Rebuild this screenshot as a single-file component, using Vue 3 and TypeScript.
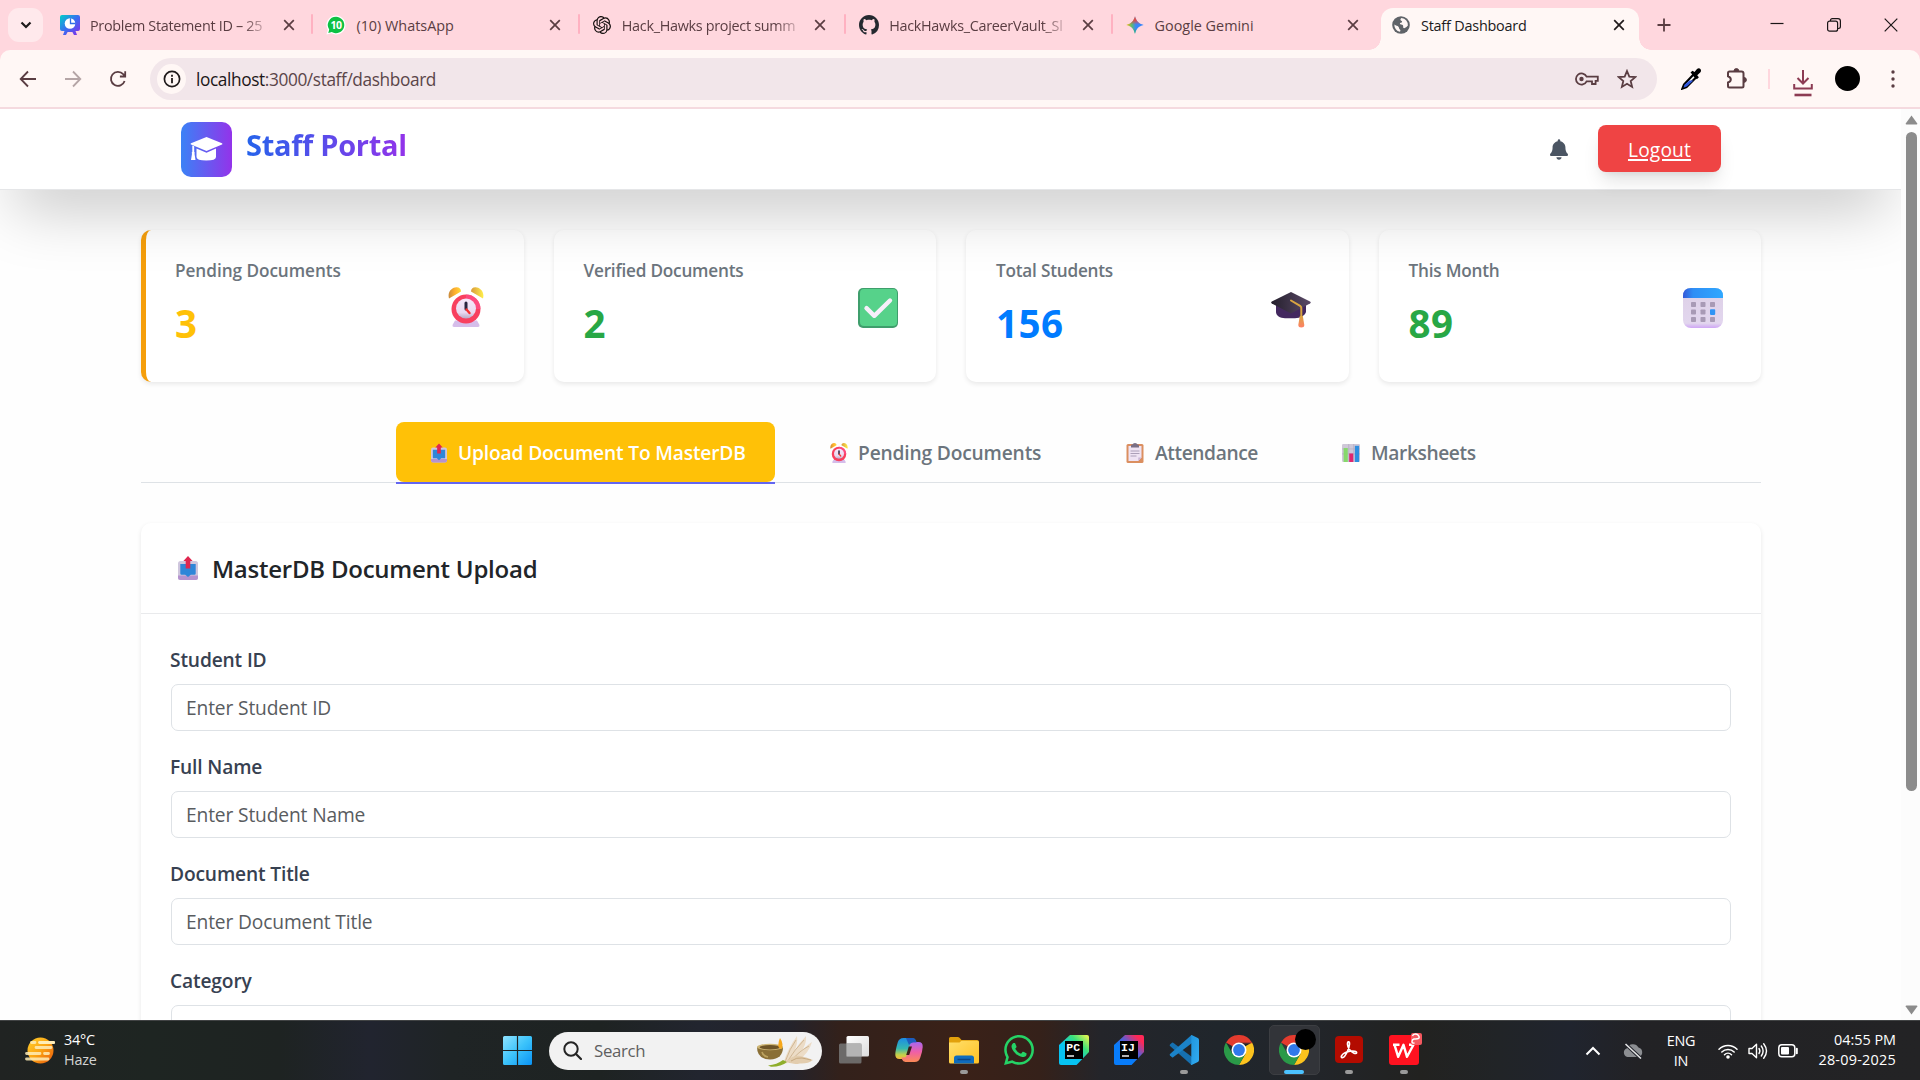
<script setup lang="ts">
interface BrowserTab {
  icon: string
  title: string
  cls: string
  active?: boolean
}
interface Stat {
  label: string
  value: string
  icon: string
  tone: string
}
interface NavTab {
  label: string
  icon: string
  cls: string
}
interface TaskApp {
  icon: string
  state?: 'open' | 'focused'
}

const browserTabs: BrowserTab[] = [
  { icon: 'board', title: 'Problem Statement ID – 25', cls: 't-board' },
  { icon: 'wa-badge', title: '(10) WhatsApp', cls: 't-wa' },
  { icon: 'openai', title: 'Hack_Hawks project summ', cls: 't-ai' },
  { icon: 'github', title: 'HackHawks_CareerVault_Sl', cls: 't-gh' },
  { icon: 'gemini', title: 'Google Gemini', cls: 't-gem' },
  { icon: 'globe', title: 'Staff Dashboard', cls: 't-staff', active: true },
]

const stats: Stat[] = [
  { label: 'Pending Documents', value: '3', icon: 'alarm', tone: 'amber' },
  { label: 'Verified Documents', value: '2', icon: 'check', tone: 'green' },
  { label: 'Total Students', value: '156', icon: 'gradcap', tone: 'blue' },
  { label: 'This Month', value: '89', icon: 'calendar', tone: 'green' },
]

const navTabs: NavTab[] = [
  { label: 'Upload Document To MasterDB', icon: 'outbox', cls: 'n-upload' },
  { label: 'Pending Documents', icon: 'alarm', cls: 'n-pending' },
  { label: 'Attendance', icon: 'clipboard', cls: 'n-attend' },
  { label: 'Marksheets', icon: 'chart', cls: 'n-marks' },
]

const fields = [
  { label: 'Student ID', placeholder: 'Enter Student ID' },
  { label: 'Full Name', placeholder: 'Enter Student Name' },
  { label: 'Document Title', placeholder: 'Enter Document Title' },
  { label: 'Category', placeholder: '' },
]

const apps: TaskApp[] = [
  { icon: 'taskview' },
  { icon: 'copilot' },
  { icon: 'explorer', state: 'open' },
  { icon: 'whatsapp' },
  { icon: 'pycharm' },
  { icon: 'intellij' },
  { icon: 'vscode', state: 'open' },
  { icon: 'chrome' },
  { icon: 'chrome', state: 'focused' },
  { icon: 'acrobat', state: 'open' },
  { icon: 'wps', state: 'open' },
]
</script>

<template>
  <svg class="defs" width="0" height="0" aria-hidden="true">
    <defs>
      <linearGradient id="g-board" x1="0" y1="0" x2="1" y2="1"><stop offset="0" stop-color="#00cfc8" /><stop offset=".5" stop-color="#3a6df0" /><stop offset="1" stop-color="#8a2be8" /></linearGradient>
      <linearGradient id="g-bell" x1="0" y1="0" x2="1" y2="0"><stop offset="0" stop-color="#c98a3c" /><stop offset=".5" stop-color="#ffb02e" /><stop offset="1" stop-color="#ffd93b" /></linearGradient>
      <linearGradient id="g-bell2" x1="0" y1="0" x2="1" y2="0"><stop offset="0" stop-color="#d9993a" /><stop offset="1" stop-color="#ffef4a" /></linearGradient>
      <linearGradient id="g-face" x1="0" y1="0" x2="0" y2="1"><stop offset="0" stop-color="#f6e6fa" /><stop offset=".7" stop-color="#ead9f0" /><stop offset="1" stop-color="#b9a9c4" /></linearGradient>
      <linearGradient id="g-cap" x1="0" y1="0" x2="1" y2="0"><stop offset="0" stop-color="#241f2c" /><stop offset="1" stop-color="#5b4a68" /></linearGradient>
      <linearGradient id="g-tassel" x1="0" y1="0" x2="0" y2="1"><stop offset="0" stop-color="#d9a441" /><stop offset="1" stop-color="#ff8066" /></linearGradient>
      <linearGradient id="g-cal" x1="0" y1="0" x2="1" y2="0"><stop offset="0" stop-color="#3458d8" /><stop offset=".25" stop-color="#2f8ef5" /><stop offset="1" stop-color="#2fa8ff" /></linearGradient>
      <linearGradient id="g-calb" x1="0" y1="0" x2="0" y2="1"><stop offset="0" stop-color="#ddd0e6" /><stop offset=".88" stop-color="#e2d6ee" /><stop offset="1" stop-color="#cfa6f5" /></linearGradient>
      <linearGradient id="g-win" x1="0" y1="0" x2="1" y2="1"><stop offset="0" stop-color="#8fe3ff" /><stop offset=".5" stop-color="#3cc3fb" /><stop offset="1" stop-color="#0a93f5" /></linearGradient>
      <linearGradient id="g-sun" x1="0" y1="0" x2="1" y2="1"><stop offset="0" stop-color="#ffd02e" /><stop offset=".5" stop-color="#fba313" /><stop offset="1" stop-color="#e8560c" /></linearGradient>
      <linearGradient id="g-folder" x1="0" y1="0" x2="1" y2="1"><stop offset="0" stop-color="#ffdf6b" /><stop offset="1" stop-color="#ffc123" /></linearGradient>
      <linearGradient id="g-cop1" x1="0" y1="0" x2="0" y2="1"><stop offset="0" stop-color="#1b8ce6" /><stop offset=".5" stop-color="#35b8b0" /><stop offset=".8" stop-color="#c3d14a" /><stop offset="1" stop-color="#f7b73a" /></linearGradient>
      <linearGradient id="g-cop2" x1="0" y1="0" x2="0" y2="1"><stop offset="0" stop-color="#a767f0" /><stop offset=".5" stop-color="#ef5fa7" /><stop offset="1" stop-color="#fb8a55" /></linearGradient>
      <linearGradient id="g-pc" x1="0" y1="1" x2="1" y2="0"><stop offset=".4" stop-color="#07c3f2" /><stop offset=".7" stop-color="#3be07a" /><stop offset="1" stop-color="#fcf84a" /></linearGradient>
      <linearGradient id="g-ij" x1="0" y1="1" x2="1" y2="0"><stop offset=".4" stop-color="#087cfa" /><stop offset=".62" stop-color="#6b57c8" /><stop offset=".85" stop-color="#fe2857" /></linearGradient>
      <linearGradient id="g-code" x1="0" y1="0" x2="1" y2="1"><stop offset="0" stop-color="#1f94dc" /><stop offset="1" stop-color="#32adf2" /></linearGradient>
      <linearGradient id="g-tv" x1="0" y1="0" x2="1" y2="1"><stop offset="0" stop-color="#ffffff" /><stop offset="1" stop-color="#dcdcdc" /></linearGradient>
      <linearGradient id="g-gem" x1="0" y1=".5" x2="1" y2=".5"><stop offset="0" stop-color="#fbbc04" /><stop offset=".32" stop-color="#5bb974" /><stop offset=".55" stop-color="#3b86f7" /><stop offset="1" stop-color="#3186ff" /></linearGradient>
      <linearGradient id="g-gem2" x1="0" y1="0" x2="0" y2="1"><stop offset="0" stop-color="#f04438" /><stop offset=".25" stop-color="#f04438" stop-opacity=".85" /><stop offset=".48" stop-color="#f04438" stop-opacity="0" /><stop offset=".7" stop-color="#0ebc5f" stop-opacity="0" /><stop offset="1" stop-color="#0ebc5f" /></linearGradient>

      <symbol id="i-board" viewBox="0 0 20 20"><path d="M2 0h16q2 0 2 2v12q0 2-2 2h-2.500l1.500 4h-3l-1.600-3h-4.800L6 20H3l1.500-4H2q-2 0-2-2V2q0-2 2-2z" fill="url(#g-board)" /><circle cx="10" cy="8.500" r="5.300" fill="#fff" /><path d="M10.500 3.200v5.300h5.200" fill="none" stroke="#2f6fe6" stroke-width="1.300" /></symbol>
      <symbol id="i-wa-badge" viewBox="0 0 20 20"><path d="M10 .5a9.500 9.500 0 1 1-4.600 17.800L.5 19.600l1.300-4.800A9.500 9.500 0 0 1 10 .5z" fill="#fff" /><path d="M10 1.800a8.200 8.200 0 1 1-4.200 15.200L2.300 17.900l.9-3.300A8.200 8.200 0 0 1 10 1.800z" fill="#0dc143" /><text x="10" y="13.800" text-anchor="middle" font-family="Open Sans, sans-serif" font-weight="700" font-size="10.500" letter-spacing="-.5" fill="#fff">10</text></symbol>
      <symbol id="i-openai" viewBox="0 0 24 24"><path fill="#16100f" d="M22.2819 9.8211a5.9847 5.9847 0 0 0-.5157-4.9108 6.0462 6.0462 0 0 0-6.5098-2.9A6.0651 6.0651 0 0 0 4.9807 4.1818a5.9847 5.9847 0 0 0-3.9977 2.9 6.0462 6.0462 0 0 0 .7427 7.0966 5.98 5.98 0 0 0 .511 4.9107 6.051 6.051 0 0 0 6.5146 2.9001A5.9847 5.9847 0 0 0 13.2599 24a6.0557 6.0557 0 0 0 5.7718-4.2058 5.9894 5.9894 0 0 0 3.9977-2.9001 6.0557 6.0557 0 0 0-.7475-7.0729zm-9.022 12.6081a4.4755 4.4755 0 0 1-2.8764-1.0408l.1419-.0804 4.7783-2.7582a.7948.7948 0 0 0 .3927-.6813v-6.7369l2.02 1.1686a.071.071 0 0 1 .038.052v5.5826a4.504 4.504 0 0 1-4.4945 4.4944zm-9.6607-4.1254a4.4708 4.4708 0 0 1-.5346-3.0137l.142.0852 4.783 2.7582a.7712.7712 0 0 0 .7806 0l5.8428-3.3685v2.3324a.0804.0804 0 0 1-.0332.0615L9.74 19.9502a4.4992 4.4992 0 0 1-6.1408-1.6464zM2.3408 7.8956a4.485 4.485 0 0 1 2.3655-1.9728V11.6a.7664.7664 0 0 0 .3879.6765l5.8144 3.3543-2.0201 1.1685a.0757.0757 0 0 1-.071 0l-4.8303-2.7865A4.504 4.504 0 0 1 2.3408 7.872zm16.5963 3.8558L13.1038 8.364 15.1192 7.2a.0757.0757 0 0 1 .071 0l4.8303 2.7913a4.4944 4.4944 0 0 1-.6765 8.1042v-5.6772a.79.79 0 0 0-.407-.667zm2.0107-3.0231l-.142-.0852-4.7735-2.7818a.7759.7759 0 0 0-.7854 0L9.409 9.2297V6.8974a.0662.0662 0 0 1 .0284-.0615l4.8303-2.7866a4.4992 4.4992 0 0 1 6.6802 4.66zM8.3065 12.863l-2.02-1.1638a.0804.0804 0 0 1-.038-.0567V6.0742a4.4992 4.4992 0 0 1 7.3757-3.4537l-.142.0805L8.704 5.459a.7948.7948 0 0 0-.3927.6813zm1.0976-2.3654l2.602-1.4998 2.6069 1.4998v2.9994l-2.5974 1.4997-2.6067-1.4997Z" /></symbol>
      <symbol id="i-github" viewBox="0 0 16 16"><path fill="#24292f" d="M8 0C3.58 0 0 3.58 0 8c0 3.54 2.29 6.53 5.47 7.59.4.07.55-.17.55-.38 0-.19-.01-.82-.01-1.49-2.01.37-2.53-.49-2.69-.94-.09-.23-.48-.94-.82-1.13-.28-.15-.68-.52-.01-.53.63-.01 1.08.58 1.23.82.72 1.21 1.87.87 2.33.66.07-.52.28-.87.51-1.07-1.78-.2-3.64-.89-3.64-3.95 0-.87.31-1.59.82-2.15-.08-.2-.36-1.02.08-2.12 0 0 .67-.21 2.2.82.64-.18 1.32-.27 2-.27s1.36.09 2 .27c1.53-1.04 2.2-.82 2.2-.82.44 1.1.16 1.92.08 2.12.51.56.82 1.27.82 2.15 0 3.07-1.87 3.75-3.65 3.95.29.25.54.73.54 1.48 0 1.07-.01 1.93-.01 2.2 0 .21.15.46.55.38A8.01 8.01 0 0 0 16 8c0-4.42-3.58-8-8-8z" /></symbol>
      <symbol id="i-gemini" viewBox="0 0 20 20"><path d="M10 .3c1.300 5.200 3.900 8 9.700 9.700-5.800 1.500-8.400 4.500-9.700 9.700-1.300-5.200-3.900-8.200-9.700-9.700C6.100 8.300 8.700 5.500 10 .3z" fill="url(#g-gem)" /><path d="M10 .3c1.300 5.200 3.900 8 9.700 9.700-5.800 1.500-8.400 4.500-9.700 9.700-1.300-5.200-3.900-8.200-9.700-9.700C6.100 8.300 8.700 5.500 10 .3z" fill="url(#g-gem2)" /></symbol>
      <symbol id="i-globe" viewBox="0 0 20 20"><circle cx="10" cy="10" r="9.800" fill="#5f6368" /><path d="M10.500 2.200c-1.500 1-1.500 2.300-.2 3 1.600.8 1 2.200-.5 2.400-1.600.2-1.200 1.800.3 1.900 2 .1 2.600 1.300 2.300 2.700-.2 1.300 1.200 1.700 2.300.9 1.300-1 2.300-2 2.900-2.400a7.600 7.600 0 0 0-7.100-8.500zM2.600 9.500c1.900 1.400 3.600 1.200 4.600 2.400.9 1.200.4 2.200 1.600 3 .9.700.6 1.800 0 2.500A7.600 7.600 0 0 1 2.600 9.500z" fill="#fff7f5" /></symbol>

      <symbol id="i-alarm" viewBox="0 0 36 40"><path d="M7 33.500h22l2.500 4.500q.4 2-1.500 2H6q-1.900 0-1.500-2z" fill="#d5bdea" /><path d="M1 11.500C-1 4 5 0 8.500.2 11.500.3 13 2 13 4.500z" fill="url(#g-bell)" /><path d="M35 11.500C37 4 31 0 27.500.2 24.500.3 23 2 23 4.500z" fill="url(#g-bell2)" /><circle cx="18" cy="22" r="14.500" fill="#f8405f" /><path d="M18 7.500A14.500 14.500 0 0 1 32.500 22h-4L18 11z" fill="#ff4d8c" opacity=".7" /><circle cx="18" cy="21.500" r="10" fill="url(#g-face)" /><path d="M18 16v6" stroke="#2a2440" stroke-width="3" stroke-linecap="round" /><path d="M18.500 22.500l3 3.500" stroke="#f8312f" stroke-width="2.400" stroke-linecap="round" /></symbol>
      <symbol id="i-check" viewBox="0 0 40 40"><rect width="40" height="40" rx="5" fill="#3f9e6c" /><rect x="2" y="1" width="37" height="37" rx="4" fill="#56d28a" /><path d="M8.500 20.200l7.800 7.600L32 12.500" fill="none" stroke="#f7effa" stroke-width="4.400" stroke-linecap="round" stroke-linejoin="round" /></symbol>
      <symbol id="i-gradcap" viewBox="0 0 40 36"><path d="M5 12v8c0 3.500 4 6.200 9 6.200h10c5 0 10-2.500 11-6.200v-8z" fill="#43285f" /><path d="M20 0l19 9.500q1.500 1 0 2L20 21.500.8 11.500q-1.300-1 0-2z" fill="url(#g-cap)" /><path d="M20 8.500l9.500 5.700q.8.600.8 1.800V24" fill="none" stroke="#d9a441" stroke-width="2" stroke-linecap="round" /><path d="M28.800 24h3l1.500 9q0 2.500-3 2.500t-3-2.500z" fill="url(#g-tassel)" /></symbol>
      <symbol id="i-calendar" viewBox="0 0 40 40"><rect width="40" height="40" rx="8" fill="url(#g-calb)" /><path d="M0 10V8q0-8 8-8h24q8 0 8 8v2z" fill="url(#g-cal)" /><g fill="#a89ab5"><rect x="8" y="14" width="5" height="5" rx=".8" /><rect x="17.500" y="14" width="5" height="5" rx=".8" /><rect x="27" y="14" width="5" height="5" rx=".8" /><rect x="8" y="21.500" width="5" height="5" rx=".8" /><rect x="17.500" y="21.500" width="5" height="5" rx=".8" /><rect x="8" y="29" width="5" height="5" rx=".8" /><rect x="17.500" y="29" width="5" height="5" rx=".8" /><rect x="27" y="29" width="5" height="5" rx=".8" /></g><rect x="27" y="21.300" width="5.200" height="5.600" rx=".8" fill="#2f94f5" /></symbol>
      <symbol id="i-outbox" viewBox="0 0 20 24"><rect x="0" y="5" width="20" height="19" rx="2.500" fill="#cfc6dd" /><path d="M0 19.500h20v2q0 2.500-2.500 2.500h-15Q0 24 0 21.500z" fill="#b593cf" /><path d="M2.300 8h15.400v9.500q0 1.200-1.200 1.200h-3.700L10 21l-2.800-2.300H3.500q-1.200 0-1.200-1.200z" fill="#2f86d8" /><path d="M10 0l4.600 5h-2.300v7.500H7.700V5H5.400z" fill="#e0264f" /></symbol>
      <symbol id="i-clipboard" viewBox="0 0 17 20"><rect y="1" width="17" height="19" rx="1.500" fill="#db8f60" /><path d="M2 3h13v11.500L11.800 18H2z" fill="#efe3f3" /><path d="M15 14.500L11.800 18v-3.500z" fill="#c9b5d6" /><path d="M4.500 4.500V2.500Q4.500 1.500 6 1.500q.4-1.500 2.500-1.500T11 1.500q1.500 0 1.500 1v2z" fill="#7a6f85" /><path d="M4 8h9M4 10.500h9M4 13h6" stroke="#aca0b8" stroke-width="1" /></symbol>
      <symbol id="i-chart" viewBox="0 0 20 20"><rect width="20" height="20" rx="1.500" fill="#cfc8d8" /><path d="M7.500 0v20M13 0v20M0 5.500h20M0 11h20" stroke="#b4abc0" stroke-width=".8" /><rect x="1.800" y="4.500" width="4.600" height="15.500" fill="#86d96b" /><rect x="8" y="10.500" width="4.500" height="9.500" fill="#e0266f" /><rect x="14.300" y="2" width="4.700" height="18" fill="#2f8fe0" /></symbol>

      <symbol id="i-taskview" viewBox="0 0 30 30"><rect x="7.500" y="1" width="22.500" height="20.500" rx="1.500" fill="url(#g-tv)" /><rect x="0" y="8.500" width="22.500" height="20" rx="1.500" fill="#777" opacity=".85" /><path d="M7.500 8.500h15v13h-15z" fill="#b4b4b4" /></symbol>
      <symbol id="i-copilot" viewBox="0 0 30 30"><path d="M9.500 3h9q2.600 0 3.400 2.600l.9 3H20q-2 0-2.700 2.200L14 21.500q-.8 2.500-3.400 2.500H5.500Q1 24 1.300 19q.2-4 2.400-11.500Q5 3 9.500 3z" fill="url(#g-cop1)" /><path d="M20.500 27h-9q-2.600 0-3.400-2.400l-.5-2H10q2 0 2.700-2.200L16 9.500Q16.800 7 19.400 7h5.100q4.500 0 4.200 5-.2 4-2.400 10.500Q25 27 20.500 27z" fill="url(#g-cop2)" /><path d="M12 3h6.500q2.600 0 3.400 2.600l.6 2H19q-3 0-4 2.500z" fill="#1c4fb8" opacity=".8" /><path d="M14.800 11.500h3.200l-2.800 8.500h-3z" fill="#3a2118" /></symbol>
      <symbol id="i-explorer" viewBox="0 0 30 30"><path d="M0 3.500Q0 2 1.500 2h7.300q1 0 1.700.8L12.500 5H28q2 0 2 2v3H0z" fill="#e2a10c" /><path d="M0 7.500h10.500l2-1.800H28.500q1.500 0 1.500 1.500V27q0 1.500-1.500 1.500h-27Q0 28.500 0 27z" fill="url(#g-folder)" /><path d="M5 28.500V23q0-2.500 2.500-2.500h15q2.500 0 2.500 2.500v5.500z" fill="#0f6cbd" /><path d="M8.500 24.500h13" stroke="#0a4586" stroke-width="1.500" /></symbol>
      <symbol id="i-whatsapp" viewBox="0 0 24 24"><path fill="#25d366" d="M17.472 14.382c-.297-.149-1.758-.867-2.03-.967-.273-.099-.471-.148-.67.15-.197.297-.767.966-.94 1.164-.173.199-.347.223-.644.075-.297-.15-1.255-.463-2.39-1.475-.883-.788-1.48-1.761-1.653-2.059-.173-.297-.018-.458.13-.606.134-.133.298-.347.446-.52.149-.174.198-.298.298-.497.099-.198.05-.371-.025-.52-.075-.149-.669-1.612-.916-2.207-.242-.579-.487-.5-.669-.51-.173-.008-.371-.01-.57-.01-.198 0-.52.074-.792.372-.272.297-1.04 1.016-1.04 2.479 0 1.462 1.065 2.875 1.213 3.074.149.198 2.096 3.2 5.077 4.487.709.306 1.262.489 1.694.625.712.227 1.36.195 1.871.118.571-.085 1.758-.719 2.006-1.413.248-.694.248-1.289.173-1.413-.074-.124-.272-.198-.57-.347m-5.421 7.403h-.004a9.87 9.87 0 01-5.031-1.378l-.361-.214-3.741.982.998-3.648-.235-.374a9.86 9.86 0 01-1.51-5.26c.001-5.45 4.436-9.884 9.888-9.884 2.64 0 5.122 1.03 6.988 2.898a9.825 9.825 0 012.893 6.994c-.003 5.45-4.437 9.884-9.885 9.884m8.413-18.297A11.815 11.815 0 0012.05 0C5.495 0 .16 5.335.157 11.892c0 2.096.547 4.142 1.588 5.945L.057 24l6.305-1.654a11.882 11.882 0 005.683 1.448h.005c6.554 0 11.89-5.335 11.893-11.893a11.821 11.821 0 00-3.48-8.413z" /></symbol>
      <symbol id="i-pycharm" viewBox="0 0 30 30"><path d="M11 0h17q2 0 2 2v15L19 28.500 17.500 30H2q-2 0-2-2V10z" fill="url(#g-pc)" /><rect x="6" y="6" width="18" height="18" /><text x="7.300" y="15.800" font-family="Liberation Mono, monospace" font-weight="700" font-size="11.500" fill="#fff">PC</text><path d="M8 21h7" stroke="#fff" stroke-width="1.400" /></symbol>
      <symbol id="i-intellij" viewBox="0 0 30 30"><path d="M11 0h17q2 0 2 2v15L19 28.500 17.500 30H2q-2 0-2-2V10z" fill="url(#g-ij)" /><rect x="6" y="6" width="18" height="18" /><text x="7" y="15.800" font-family="Liberation Mono, monospace" font-weight="700" font-size="11.500" fill="#fff">IJ</text><path d="M8 21h7" stroke="#fff" stroke-width="1.400" /></symbol>
      <symbol id="i-vscode" viewBox="0 0 30 30"><path d="M1 9.500l2-1.700q.6-.4 1.200 0L23 22v7.500q-.8.300-1.600-.4L1 11q-.7-.8 0-1.500z" fill="#1670b0" /><path d="M1 20.500l2 1.700q.6.400 1.200 0L23 8V.5q-.8-.3-1.600.4L1 19q-.7.800 0 1.500z" fill="#1b83c9" /><path d="M21.500.3q.8-.5 1.700-.1l5.600 2.700q1.200.6 1.200 2v20.200q0 1.400-1.200 2l-5.600 2.700q-.9.400-1.700-.1.800 0 .8-1.200V1.500q0-1.200-.8-1.200z" fill="url(#g-code)" /></symbol>
      <symbol id="i-chrome" viewBox="0 0 30 30"><path d="M15 15L2 7.500A15 15 0 0 1 28 7.500H15z" fill="#e33b2e" /><path d="M15 15h-.1L28 7.500A15 15 0 0 1 15 30l6.500-11.200z" fill="#fcc31e" /><path d="M15 15l6.500 3.700L15 30A15 15 0 0 1 2 7.500l6.500 11.300z" fill="#2a9a48" /><path d="M15 8.200h13.400l-.4-.8H15z" fill="#e33b2e" /><circle cx="15" cy="15" r="7.500" fill="#fff" /><circle cx="15" cy="15" r="5.900" fill="#3079ea" /></symbol>
      <symbol id="i-acrobat" viewBox="0 0 30 30"><rect x="1" y="1" width="28" height="27" rx="4" fill="#b30b00" /><path d="M7.500 21c1-2.300 4.800-4 8.500-4.700 3.500-.7 7 0 6.600 1.600-.5 1.600-5-.4-7.200-3.300C13 11.400 13 7 14.500 6.700c1.800-.2 1 4.800-.9 9.300-1.600 3.700-4 7-5.600 6.600-.8-.2-.9-.9-.5-1.600z" fill="none" stroke="#fff" stroke-width="1.600" /></symbol>
      <symbol id="i-wps" viewBox="0 0 30 30"><rect width="30" height="30" rx="3" fill="#ff1220" /><path d="M4 9.800h6.500M5.500 9.800l3.700 12 5.300-12 3.500 12 6.500-12h-4.500" fill="none" stroke="#fff" stroke-width="2.400" stroke-linejoin="round" /></symbol>
    </defs>
  </svg>

  <div class="screen">
    <div class="tabstrip">
      <button class="tab-search" aria-label="Search tabs">
        <svg width="12" height="8" viewBox="0 0 12 8"><path d="M1.500 1.500L6 6l4.500-4.500" fill="none" stroke="#1f1a1b" stroke-width="2.200" /></svg>
      </button>
      <div class="tabs">
        <div v-for="(t, i) in browserTabs" :key="t.title" class="tab" :class="[t.cls, { active: t.active, divided: i < 4 }]">
          <svg class="favicon"><use :href="`#i-${t.icon}`" /></svg>
          <span class="tab-title">{{ t.title }}</span>
          <svg class="tab-close" viewBox="0 0 12 12"><path d="M1.200 1.200l9.600 9.600M10.800 1.200l-9.600 9.600" /></svg>
        </div>
      </div>
      <svg class="new-tab" viewBox="0 0 14 14"><path d="M7 .5v13M.5 7h13" stroke="#5a3d42" stroke-width="1.800" /></svg>
      <div class="win-controls">
        <svg viewBox="0 0 14 14"><path d="M.5 5.500h13" /></svg>
        <svg viewBox="0 0 14 14"><rect x=".6" y="3.200" width="10" height="10" rx="2" /><path d="M3.500 3V2.500Q3.500.6 5.400.6H11q2.400 0 2.400 2.400v5.600q0 1.900-1.900 1.900h-.7" /></svg>
        <svg viewBox="0 0 14 14"><path d="M.7.700l12.600 12.600M13.300.7L.7 13.300" /></svg>
      </div>
    </div>

    <div class="toolbar">
      <svg class="nav-ic" viewBox="0 0 18 18"><path d="M17 9H2M9 1.500L1.700 9 9 16.500" /></svg>
      <svg class="nav-ic dim" viewBox="0 0 18 18"><path d="M1 9h15M9 1.500L16.300 9 9 16.500" /></svg>
      <svg class="nav-ic" viewBox="0 0 18 18"><path d="M15.600 11A7 7 0 1 1 14.200 4.200L16 6M16.200 1.200v5.300h-5.300" /></svg>
      <div class="omnibox">
        <div class="site-info">
          <svg width="18" height="18" viewBox="0 0 18 18"><circle cx="9" cy="9" r="7.600" fill="none" stroke="#201a1b" stroke-width="1.700" /><path d="M9 8v5.200M9 4.700v2" stroke="#201a1b" stroke-width="1.800" /></svg>
        </div>
        <span class="url"><b>localhost</b>:3000/staff/dashboard</span>
        <svg class="key" viewBox="0 0 24 14"><path d="M11.600 4.600H22.800V8.800H20.600V12H17V9.400H11.600A5.600 5.600 0 1 1 11.600 4.600z" /><circle cx="6.500" cy="7" r="2.200" class="solid" /></svg>
        <svg class="star" viewBox="0 0 20 20"><path d="M10 2l2.300 5.600 6 .5-4.600 3.900 1.400 5.900L10 14.800l-5.100 3.100 1.400-5.900-4.600-3.900 6-.5z" /></svg>
      </div>
      <div class="ext">
        <svg class="dropper" width="20" height="22" viewBox="0 0 20 22"><path d="M12.500 6.500L3 16.500l-1.500 4 4-1.500L15 9.500z" fill="#fff" stroke="#000" stroke-width="2.200" /><path d="M8.500 12.500h4l-6.700 6-3.300 1.200 1-3z" fill="#2f56dd" /><path d="M9.500 4.500l2-1.700 2 1.300 2.500-3q2-1.500 3.400 0 1.300 1.600-.2 3.500l-3 2.600 1.700 2-2 2z" fill="#000" /></svg>
        <svg class="puzzle" width="22" height="22" viewBox="0 0 22 22"><path d="M7 3.500h8.500q2 0 2 2V18q0 1.500-1.500 1.500H3.500q-1.500 0-1.500-1.500v-3.500q2.800-.8 2.800-3T2 8.300V5q0-1.500 1.500-1.500z" fill="none" stroke="#5a3d42" stroke-width="2" /><path d="M8 3a2.400 2.400 0 0 1 4.800 0zM18 9.500a2.400 2.400 0 0 1 0 4.800z" fill="#5a3d42" stroke="#5a3d42" /></svg>
        <i class="bar-sep"></i>
        <svg class="download" width="20" height="28" viewBox="0 0 20 28"><path d="M10 1v13M4.500 9L10 14.500 15.500 9M1.200 15v4.500h17.600V15" /><path d="M1.500 26h17" stroke-width="2.600" /></svg>
        <i class="avatar"></i>
        <svg class="kebab" width="4" height="18" viewBox="0 0 4 18"><circle cx="2" cy="2" r="1.700" /><circle cx="2" cy="9" r="1.700" /><circle cx="2" cy="16" r="1.700" /></svg>
      </div>
    </div>

    <div class="viewport">
      <main class="page">
        <header class="app-header">
          <div class="logo">
            <svg width="33" height="24" viewBox="0 0 33 24"><path d="M16.500 0L32 6.300q1 .7 0 1.300L16.500 14 1 7.600q-1-.6 0-1.300z" fill="#fff" /><path d="M6.500 11.500L16.500 15.700 26 11.500v8.500q0 3.500-9.700 3.500T6.500 20zM2.300 8.500l1.900.8v5.500q1 .8.300 2L5.500 23H1l1-6.200q-.8-1.200.3-2z" fill="#fff" /></svg>
          </div>
          <h1>Staff Portal</h1>
          <svg class="bell" width="18" height="21" viewBox="0 0 448 512"><path fill="#4b5563" d="M224 512c35.320 0 63.970-28.650 63.970-64H160.030c0 35.350 28.650 64 63.970 64zm215.390-149.710c-19.320-20.760-55.470-51.990-55.470-154.290 0-77.700-54.480-139.900-127.940-155.160V32c0-17.670-14.320-32-31.980-32s-31.980 14.330-31.980 32v20.840C118.560 68.100 64.080 130.300 64.080 208c0 102.300-36.150 133.530-55.470 154.290-6 6.450-8.660 14.160-8.610 21.710.11 16.400 12.980 32 32.100 32h383.800c19.120 0 32-15.600 32.100-32 .05-7.550-2.610-15.270-8.610-21.710z" /></svg>
          <a class="logout">Logout</a>
        </header>

        <section class="stats">
          <article v-for="(s, i) in stats" :key="s.label" class="stat" :class="{ first: i === 0 }">
            <div>
              <p class="stat-label">{{ s.label }}</p>
              <p class="stat-value" :class="s.tone">{{ s.value }}</p>
            </div>
            <svg class="stat-icon" :class="s.icon"><use :href="`#i-${s.icon}`" /></svg>
          </article>
        </section>

        <nav class="nav-tabs">
          <a v-for="(n, i) in navTabs" :key="n.label" class="nav-tab" :class="[n.cls, { current: i === 0 }]">
            <span class="nav-glyph"><svg :class="n.icon"><use :href="`#i-${n.icon}`" /></svg></span>
            <span class="nav-label">{{ n.label }}</span>
          </a>
        </nav>

        <section class="panel">
          <div class="panel-head">
            <svg class="panel-icon"><use href="#i-outbox" /></svg>
            <h2>MasterDB Document Upload</h2>
          </div>
          <form class="panel-body">
            <label v-for="f in fields" :key="f.label" class="field">
              <span>{{ f.label }}</span>
              <input type="text" :placeholder="f.placeholder" />
            </label>
          </form>
        </section>
      </main>
      <div class="scrollbar">
        <svg width="13" height="10" viewBox="0 0 13 10"><path d="M6.500.5L12.300 8.500q.2 1-.8 1H1.500q-1 0-.8-1z" fill="#8b8b8b" /></svg>
        <i class="thumb"></i>
        <svg class="down" width="13" height="10" viewBox="0 0 13 10"><path d="M6.500 9.500L12.300 1.500q.2-1-.8-1H1.500q-1 0-.8 1z" fill="#8b8b8b" /></svg>
      </div>
    </div>

    <footer class="taskbar">
      <div class="weather">
        <svg width="30" height="28" viewBox="0 0 30 28"><circle cx="15.500" cy="13.500" r="13" fill="url(#g-sun)" /><g stroke="#ffedb8" stroke-width="2.800" stroke-linecap="round"><path d="M14.500 5.500H29" /><path d="M6.500 5.500h3.500M1.500 16.500H15M19.500 16.500h4M11 10.500h15" opacity=".85" /><path d="M1.500 22H23" opacity=".85" /></g></svg>
        <div class="stack"><span>34°C</span><span class="soft">Haze</span></div>
      </div>
      <svg class="start" width="29" height="29" viewBox="0 0 29 29"><path d="M0 1.500Q0 0 1.500 0H13.900V13.900H0zM15.100 0H27.500Q29 0 29 1.500V13.900H15.100zM0 15.100H13.900V29H1.500Q0 29 0 27.500zM15.100 15.100H29V27.500Q29 29 27.500 29H15.100z" fill="url(#g-win)" /></svg>
      <div class="search">
        <svg width="19" height="19" viewBox="0 0 19 19"><circle cx="8" cy="8" r="6.700" fill="none" stroke="#242424" stroke-width="2" /><path d="M13 13l5 5" stroke="#242424" stroke-width="2.200" stroke-linecap="round" /></svg>
        <span>Search</span>
        <svg class="art" width="58" height="32" viewBox="0 0 58 32"><path d="M27 29Q32 13 41 1 42 9 38 17 43 8 50 1 51 10 43 20 49 11 56 7 53 18 42 26z" fill="#ecdcc6" /><path d="M29 27Q34 13 40 5M31 27Q39 14 48 5M33 28Q43 16 53 11" stroke="#cdb28e" stroke-width=".9" fill="none" /><path d="M30 26q8-6 14-5t13 4q-5 4-13 3.500-8 2-14-2.500z" fill="#e3cdae" /><path d="M35 26q6-4 11-3t9 2" stroke="#bf9f75" stroke-width=".8" fill="none" /><path d="M12 30.500q9-1 15-5.500l4 2q-6 5-16 4.800z" fill="#8fae2b" /><path d="M1 12q12-5 26 0 0 12-13 12.500Q1 24 1 12z" fill="#8a6f36" /><ellipse cx="14" cy="12" rx="13" ry="3.300" fill="#cfb777" /><ellipse cx="14" cy="12.300" rx="10.500" ry="2.200" fill="#6e5528" /><path d="M6 17q1 4 6 5" stroke="#bda35f" stroke-width="1.600" fill="none" /><path d="M24 3q4 6 1.500 11-4-1-3-5.500.3-3 1.500-5.500z" fill="#f7a81b" /></svg>
      </div>
      <div class="apps">
        <div v-for="(a, i) in apps" :key="i" class="app" :class="a.state">
          <svg class="app-icon"><use :href="`#i-${a.icon}`" /></svg>
          <i v-if="a.state" class="pip"></i>
          <i v-if="a.state === 'focused'" class="profile"></i>
          <span v-if="a.icon === 'wps'" class="wps-badge"><svg width="9" height="11" viewBox="0 0 9 11"><path d="M1.500 3Q2 1 4.500 1T8 3.500 4.500 6H3Q1 6.500 1 8.500T3.500 10" fill="none" stroke="#fff" stroke-width="1.400" /></svg></span>
        </div>
      </div>
      <div class="tray">
        <svg class="chev" width="16" height="10" viewBox="0 0 16 10"><path d="M1.500 8.500L8 2l6.500 6.500" /></svg>
        <svg class="cloud" width="20" height="16" viewBox="0 0 20 16"><path d="M4.500 14A4.500 4.500 0 0 1 4 5.300 6.300 6.300 0 0 1 15.500 4.500 5 5 0 0 1 16 14z" fill="#8c8e92" /><path d="M2.500 1L18 15.500" stroke="#22242c" stroke-width="3.500" /><path d="M2.500 1L18 15.500" stroke="#e6e6e6" stroke-width="1.500" /></svg>
        <div class="stack lang"><span>ENG</span><span>IN</span></div>
        <div class="status">
          <svg width="20" height="16" viewBox="0 0 20 16"><g fill="none" stroke="#fff" stroke-width="1.500" stroke-linecap="round"><path d="M1 6.200a12.600 12.600 0 0 1 18 0" /><path d="M3.800 9a8.800 8.800 0 0 1 12.400 0" /><path d="M6.500 11.700a5 5 0 0 1 7 0" /></g><circle cx="10" cy="14" r="1.800" fill="#fff" /></svg>
          <svg width="20" height="18" viewBox="0 0 20 18"><g fill="none" stroke="#fff" stroke-width="1.400" stroke-linejoin="round" stroke-linecap="round"><path d="M1 6.500h3L8.500 2.300v13.400L4 11.500H1z" /><path d="M11 6.500q1.800 2.500 0 5" /><path d="M13.300 4q3.600 5 0 10" /><path d="M15.700 1.700q5.600 7.300 0 14.600" /></g></svg>
          <svg width="20" height="14" viewBox="0 0 20 14"><rect x=".8" y=".8" width="16" height="12" rx="3" fill="none" stroke="#fff" stroke-width="1.500" /><rect x="3" y="3" width="8" height="7.600" rx="1" fill="#fff" /><path d="M18.800 4.800v4.400" stroke="#fff" stroke-width="2" stroke-linecap="round" /></svg>
        </div>
        <div class="stack clock"><span>04:55 PM</span><span class="date">28-09-2025</span></div>
      </div>
    </footer>
  </div>
</template>

<style>
body {
  margin: 0;
  overflow: hidden;
}
</style>

<style scoped>
.defs {
  position: absolute;
}
.screen,
.screen * {
  box-sizing: border-box;
}
.screen {
  width: 1920px;
  height: 1080px;
  display: flex;
  flex-direction: column;
  overflow: hidden;
  font-family: 'Open Sans', 'Noto Sans', sans-serif;
  background: #ffd7de;
}
svg {
  display: block;
  flex: none;
}
i {
  display: block;
}
p,
h1,
h2 {
  margin: 0;
}

/* Browser tab strip */
.tabstrip {
  height: 50px;
  flex: none;
  display: flex;
  align-items: flex-start;
  padding-left: 8px;
}
.tab-search {
  width: 35px;
  height: 34px;
  margin-top: 8px;
  border: 0;
  padding: 0;
  border-radius: 11px;
  background: #ffe9ec;
  display: flex;
  align-items: center;
  justify-content: center;
}
.tabs {
  display: flex;
  margin-left: 3px;
}
.tab {
  width: 266.4px;
  height: 50px;
  padding: 0 0 0 13px;
  display: flex;
  align-items: center;
  position: relative;
}
.tab.divided::after {
  content: '';
  position: absolute;
  right: -1px;
  top: 14px;
  width: 2px;
  height: 20px;
  background: #ffb1c1;
  border-radius: 1px;
}
.favicon {
  width: 20px;
  height: 20px;
  margin-left: 1px;
}
.t-ai .favicon,
.t-gem .favicon,
.t-staff .favicon {
  width: 18px;
  height: 18px;
  margin: 0 1px;
}
.tab-title {
  width: 178px;
  margin-left: 10px;
  padding-top: 2px;
  font-size: 14.4px;
  line-height: 20px;
  color: #5a3d42;
  white-space: nowrap;
  letter-spacing: -0.3px;
}
.t-wa .tab-title,
.t-gem .tab-title {
  letter-spacing: 0;
}
.t-staff .tab-title {
  letter-spacing: -0.2px;
}
.t-board .tab-title,
.t-ai .tab-title,
.t-gh .tab-title {
  mask-image: linear-gradient(90deg, #000 86%, rgba(0, 0, 0, 0.15) 100%);
}
.tab-close {
  width: 12px;
  height: 12px;
  margin-left: 15px;
  stroke: #5a3d42;
  stroke-width: 1.7;
}
.t-ai .tab-close,
.t-gem .tab-close,
.t-staff .tab-close {
  margin-left: 14px;
}
.tab.active::before {
  content: '';
  position: absolute;
  left: 3px;
  top: 8px;
  width: 258px;
  height: 42px;
  background: #fff7f5;
  border-radius: 12px 12px 0 0;
}
.tab.active::after {
  content: '';
  position: absolute;
  left: -9px;
  bottom: 0;
  width: 282px;
  height: 12px;
  background:
    radial-gradient(circle at 0 0, transparent 11.5px, #fff7f5 12px) 0 0 / 12px 12px no-repeat,
    radial-gradient(circle at 100% 0, transparent 11.5px, #fff7f5 12px) 100% 0 / 12px 12px no-repeat;
}
.tab.active > * {
  position: relative;
}
.tab.active .tab-title {
  color: #201a1b;
}
.tab.active .tab-close {
  stroke: #201a1b;
}
.new-tab {
  width: 14px;
  height: 14px;
  margin: 18px 0 0 13px;
}
.win-controls {
  display: flex;
  gap: 43px;
  margin: 18px 22px 0 auto;
}
.win-controls svg {
  width: 14px;
  height: 14px;
  fill: none;
  stroke: #1a1516;
  stroke-width: 1.2;
}

/* Browser toolbar */
.toolbar {
  height: 59px;
  flex: none;
  display: flex;
  align-items: center;
  padding-left: 18.500px;
  background: #fff7f5;
  border-radius: 10px 10px 0 0;
  border-bottom: 2px solid #f5dadf;
}
.nav-ic {
  width: 18px;
  height: 18px;
  margin-right: 27px;
  fill: none;
  stroke: #5a3d42;
  stroke-width: 1.8;
}
.nav-ic.dim {
  stroke: #b5a5a6;
}
.omnibox {
  width: 1507px;
  height: 42px;
  margin-left: -3.500px;
  padding: 0 18px 0 7px;
  border-radius: 21px;
  background: #f2e6ea;
  display: flex;
  align-items: center;
}
.site-info {
  width: 29px;
  height: 30px;
  border-radius: 50%;
  background: #fff7f5;
  display: flex;
  align-items: center;
  justify-content: center;
}
.url {
  margin-left: 10px;
  padding-top: 2px;
  flex: 1;
  font-size: 17.3px;
  line-height: 24px;
  color: #5b4549;
  letter-spacing: -0.4px;
}
.url b {
  font-weight: 400;
  color: #1d1718;
}
.key {
  width: 24px;
  height: 14px;
  margin-right: 18px;
}
.key,
.star {
  fill: none;
  stroke: #5a3d42;
  stroke-width: 1.8;
}
.key .solid {
  fill: #5a3d42;
  stroke: none;
}
.star {
  width: 20px;
  height: 20px;
  margin-right: 2px;
}
.ext {
  flex: 1;
  display: flex;
  align-items: center;
}
.dropper {
  margin-left: 24px;
}
.puzzle {
  margin-left: 25px;
}
.bar-sep {
  width: 2px;
  height: 20px;
  margin-left: 20px;
  background: #ffd7de;
}
.download {
  margin-left: 23px;
  margin-top: 8px;
  fill: none;
  stroke: #8c3b53;
  stroke-width: 2;
}
.avatar {
  width: 25px;
  height: 25px;
  margin-left: 22px;
  border-radius: 50%;
  background: #000;
}
.kebab {
  margin-left: 31px;
  fill: #5a3d42;
}

/* Page */
.viewport {
  height: 911px;
  flex: none;
  display: flex;
  overflow: hidden;
  background: #fff;
}
.page {
  width: 1901px;
  height: 911px;
  overflow: hidden;
  background: #fefefe;
}
.app-header {
  position: relative;
  z-index: 5;
  height: 81px;
  padding: 0 180px 1px 181px;
  display: flex;
  align-items: center;
  background: #fff;
  box-shadow: 0 31px 62px -15px rgba(0, 0, 0, 0.25);
  border-bottom: 1px solid #e5e6e8;
}
.logo {
  width: 51px;
  height: 55px;
  margin-top: 1px;
  border-radius: 10px;
  background: linear-gradient(90deg, #3b82f6, #9333ea);
  display: flex;
  align-items: center;
  justify-content: center;
}
h1 {
  margin: -8px auto 0 14px;
  font-size: 29px;
  line-height: 40px;
  font-weight: 700;
  letter-spacing: -0.3px;
  background: linear-gradient(90deg, #2563eb, #9333ea);
  background-clip: text;
  color: transparent;
}
.bell {
  margin-top: 2px;
  margin-right: 30px;
}
.logout {
  width: 123px;
  height: 47px;
  border-radius: 8px;
  background: #ef4444;
  color: #fff;
  font-size: 19.2px;
  line-height: 50px;
  text-align: center;
  text-decoration: underline;
  text-underline-offset: 2px;
  text-decoration-thickness: 1.5px;
  letter-spacing: 0.15px;
  box-shadow: 0 12px 19px -4px rgba(0, 0, 0, 0.12), 0 5px 8px -5px rgba(0, 0, 0, 0.1);
}
.stats {
  display: grid;
  grid-template-columns: repeat(4, 1fr);
  gap: 30px;
  width: 1620px;
  margin: 40px 0 0 141px;
}
.stat {
  height: 152px;
  padding: 0 30px;
  display: flex;
  justify-content: space-between;
  background: #fff;
  border-radius: 10px;
  box-shadow: 0 2px 5px rgba(0, 0, 0, 0.09);
}
.stat.first {
  border-left: 5px solid #f59e0b;
  padding-left: 29px;
}
.stat-label {
  margin-top: 27px;
  font-size: 17.2px;
  line-height: 27px;
  font-weight: 600;
  color: #6c757d;
  letter-spacing: -0.22px;
}
.first .stat-label {
  letter-spacing: -0.05px;
}
.stat-value {
  margin-top: 15px;
  font-size: 38.5px;
  line-height: 48px;
  font-weight: 700;
  letter-spacing: 0.5px;
}
.amber {
  color: #ffc107;
}
.green {
  color: #28a745;
}
.blue {
  color: #007bff;
}
.stat-icon {
  width: 40px;
  height: 40px;
  margin: 58px 8px 0 0;
}
.stat-icon.alarm {
  width: 36px;
  margin: 57px 10px 0 0;
}
.stat-icon.gradcap {
  height: 36px;
  margin-top: 62px;
}

.nav-tabs {
  width: 1620px;
  height: 61px;
  margin: 40px 0 0 141px;
  padding-left: 255px;
  display: flex;
  border-bottom: 1px solid #dee2e6;
}
.nav-tab {
  height: 62px;
  display: flex;
  align-items: center;
  font-size: 19.2px;
  line-height: 29px;
  font-weight: 600;
  color: #6c757d;
}
.nav-glyph {
  width: 25px;
  height: 60px;
  display: flex;
  align-items: center;
  justify-content: center;
}
.nav-glyph svg {
  width: 18px;
  height: 20px;
}
.nav-glyph .outbox {
  width: 16px;
}
.nav-label {
  margin-left: 7px;
  height: 30px;
  white-space: nowrap;
  letter-spacing: -0.17px;
}
.nav-tab.current {
  width: 379px;
  padding-left: 30px;
  color: #fff;
  background: linear-gradient(#6366f1, #6366f1) 0 60px / 100% 2px no-repeat;
  position: relative;
}
.nav-tab.current::before {
  content: '';
  position: absolute;
  inset: 0 0 2px;
  border-radius: 8px;
  background: #ffc107;
}
.nav-tab.current > * {
  position: relative;
}
.n-pending {
  width: 297px;
  padding-left: 51px;
}
.n-attend {
  width: 218px;
  padding-left: 50px;
}
.n-marks {
  padding-left: 48px;
}
.n-attend .nav-label,
.n-marks .nav-label {
  margin-left: 8px;
  letter-spacing: -0.4px;
}

.panel {
  width: 1620px;
  height: 700px;
  margin: 40px 0 0 141px;
  border-radius: 10px;
  background: #fff;
  box-shadow: 0 2px 5px rgba(0, 0, 0, 0.09);
}
.panel-head {
  height: 91px;
  padding-left: 37px;
  display: flex;
  align-items: center;
  border-bottom: 1px solid #e9eaec;
}
.panel-icon {
  width: 20px;
  height: 24px;
}
h2 {
  margin: 1px 0 0 14px;
  font-size: 24px;
  line-height: 36px;
  font-weight: 600;
  color: #212529;
  letter-spacing: -0.24px;
}
.panel-body {
  padding: 31px 30px 0;
  display: flex;
  flex-direction: column;
  gap: 21px;
}
.field {
  height: 86px;
  display: flex;
  flex-direction: column;
  justify-content: space-between;
}
.field span {
  margin-left: -1px;
  font-size: 19.2px;
  line-height: 30px;
  font-weight: 600;
  color: #374151;
  letter-spacing: -0.15px;
}
.field input {
  width: 100%;
  height: 47px;
  padding: 0 14px;
  border: 1px solid #dee2e6;
  border-radius: 7px;
  background: #fff;
  outline: 0;
  font: 400 19.2px 'Open Sans', 'Noto Sans', sans-serif;
  letter-spacing: -0.14px;
}
.field input::placeholder {
  color: #595c5f;
  opacity: 1;
}

.scrollbar {
  width: 19px;
  padding: 6px 0 5px 1px;
  display: flex;
  flex-direction: column;
  align-items: center;
  background: #fcfcfc;
}
.thumb {
  width: 11px;
  height: 659px;
  margin-top: 7px;
  border-radius: 6px;
  background: #8b8b8b;
}
.down {
  margin-top: auto;
}

/* Windows taskbar */
.taskbar {
  height: 60px;
  flex: none;
  display: flex;
  align-items: center;
  border-top: 1px solid #414344;
  color: #fff;
  background: linear-gradient(90deg, #202322 0, #1e2522 150px, #1e2322 280px, #21242f 370px, #1f2425 450px, #1e2322 600px, #22252f 700px, #24232b 790px, #33211b 840px, #3a2118 960px, #35211a 1040px, #24252a 1100px, #20262c 1220px, #22252a 1310px, #222220 1420px, #212427 1500px, #20242e 1570px, #222225 1640px, #232325 1920px);
}
.weather {
  width: 503px;
  padding-left: 25px;
  display: flex;
  align-items: center;
}
.stack {
  display: flex;
  flex-direction: column;
  margin-top: -2px;
  font-size: 14.4px;
  line-height: 20px;
  letter-spacing: -0.2px;
}
.weather .stack {
  margin-left: 9px;
}
.weather .soft {
  color: #d2d3d3;
}
.search {
  width: 273px;
  height: 38px;
  margin-left: 17px;
  padding: 0 8px 0 14px;
  border-radius: 19px;
  background: #f2f2f2;
  display: flex;
  align-items: center;
}
.search span {
  margin-left: 12px;
  font-size: 16.8px;
  color: #5f5f5f;
  letter-spacing: -0.3px;
}
.art {
  margin-left: auto;
}
.apps {
  display: flex;
  margin: -1px 0 0 4.500px;
}
.app {
  width: 55px;
  height: 50px;
  position: relative;
  display: flex;
  align-items: center;
  justify-content: center;
}
.app-icon {
  width: 30px;
  height: 30px;
}
.app.focused {
  width: 51px;
  margin: 0 2px;
  border-radius: 5px;
  background: #323439;
  border: 1px solid #3c3e42;
}
.pip {
  position: absolute;
  left: 50%;
  bottom: 1px;
  width: 8px;
  height: 4px;
  margin-left: -4px;
  border-radius: 2px;
  background: #9a9a9a;
}
.focused .pip {
  bottom: 0;
  width: 20px;
  margin-left: -10px;
  background: #4cc2ff;
}
.profile {
  position: absolute;
  left: 25px;
  top: 3px;
  width: 21px;
  height: 21px;
  border-radius: 50%;
  background: #000;
}
.wps-badge {
  position: absolute;
  right: 10px;
  top: 8px;
  width: 11px;
  height: 12px;
  border-radius: 2px;
  background: #f4585f;
}
.tray {
  margin-left: auto;
  padding-right: 24px;
  display: flex;
  align-items: center;
}
.chev {
  margin: 0 12px;
  fill: none;
  stroke: #fff;
  stroke-width: 2;
}
.cloud {
  margin: 0 10px;
}
.lang {
  width: 56px;
  margin-top: 0;
  text-align: center;
}
.status {
  display: flex;
  align-items: center;
  gap: 10px;
  margin-left: 9px;
}
.clock {
  width: 98px;
  text-align: right;
  letter-spacing: 0;
}
.clock .date {
  letter-spacing: 0.25px;
}
</style>
